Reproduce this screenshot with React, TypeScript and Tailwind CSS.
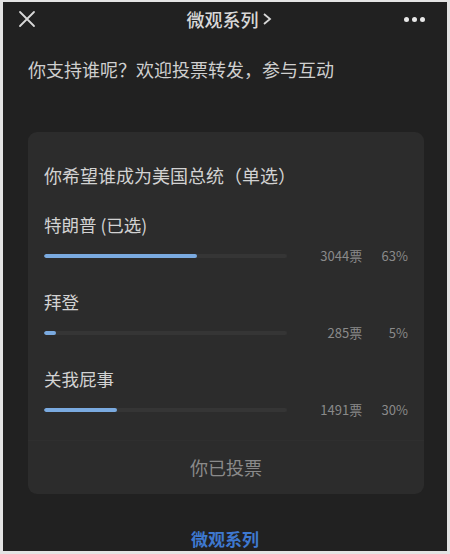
const font = { fontFamily: '"Noto Sans CJK SC", "Noto Sans", sans-serif' };

type Option = { label: string; votes: number; pct: number };

const options: Option[] = [
  { label: "特朗普 (已选)", votes: 3044, pct: 63 },
  { label: "拜登", votes: 285, pct: 5 },
  { label: "关我屁事", votes: 1491, pct: 30 },
];

function OptionRow({ o }: { o: Option }) {
  return (
    <div className="flex flex-col">
      <div className="text-[17.5px] leading-[22px] text-[#d2d2d2]">{o.label}</div>
      <div className="mt-[11px] flex items-center h-[18px]">
        <div className="w-[244px] h-[4px] bg-[#353535] rounded-full overflow-hidden">
          <div className="h-full bg-[#7aaae0] rounded-full" style={{ width: `${o.pct}%` }} />
        </div>
        <div className="w-[76px] text-right text-[13px] text-[#8a8a8a]">{o.votes}票</div>
        <div className="w-[46px] text-right text-[13px] text-[#8a8a8a]">{o.pct}%</div>
      </div>
    </div>
  );
}

export default function App() {
  return (
    <div className="w-[450px] h-[554px] bg-[#e4e4e4] pl-[3px] pt-[2px] pr-[3px] pb-[3px]" style={font}>
      <div className="h-full bg-[#212121] flex flex-col">
        {/* Header */}
        <div className="h-[34px] flex items-center justify-between pl-[15px] pr-[22px]">
          <svg width="18" height="18" viewBox="0 0 18 18" className="text-[#d8d8d8]">
            <path d="M2 2 L16 16 M16 2 L2 16" stroke="currentColor" strokeWidth="1.8" strokeLinecap="round" />
          </svg>
          <div className="text-[18px] text-[#d8d8d8] font-medium flex items-center gap-[3px] ml-[18px]">
            微观系列
            <svg width="10" height="14" viewBox="0 0 10 14">
              <path d="M2 2 L8 7 L2 12" stroke="#d8d8d8" strokeWidth="1.8" fill="none" />
            </svg>
          </div>
          <div className="flex gap-[3px] items-center">
            <span className="w-[5px] h-[5px] rounded-full bg-[#e8e8e8]" />
            <span className="w-[5px] h-[5px] rounded-full bg-[#e8e8e8]" />
            <span className="w-[5px] h-[5px] rounded-full bg-[#e8e8e8]" />
          </div>
        </div>

        <div className="mt-[20px] px-[25px] text-[18px] leading-[26px] text-[#cfcfcf]">
          你支持谁呢？欢迎投票转发，参与互动
        </div>

        {/* Card */}
        <div className="mt-[50px] ml-[25px] mr-[23px] bg-[#2c2c2c] rounded-[9px] h-[362px] flex flex-col px-[16px]">
          <div className="mt-[30px] text-[18px] leading-[26px] text-[#d2d2d2]">
            你希望谁成为美国总统（单选）
          </div>
          <div className="mt-[26px] flex flex-col gap-[26px]">
            {options.map((o) => (
              <OptionRow key={o.label} o={o} />
            ))}
          </div>
          <div className="mt-[21px] -mx-[16px] border-t border-[#2f2f2f]" />
          <div className="flex-1 flex items-center justify-center text-[18px] text-[#8a8a8a]">
            你已投票
          </div>
        </div>

        <div className="flex-1 flex items-end justify-center">
          <div className="text-[17px] font-bold text-[#3e78cf] leading-[24px]">微观系列</div>
        </div>
      </div>
    </div>
  );
}
